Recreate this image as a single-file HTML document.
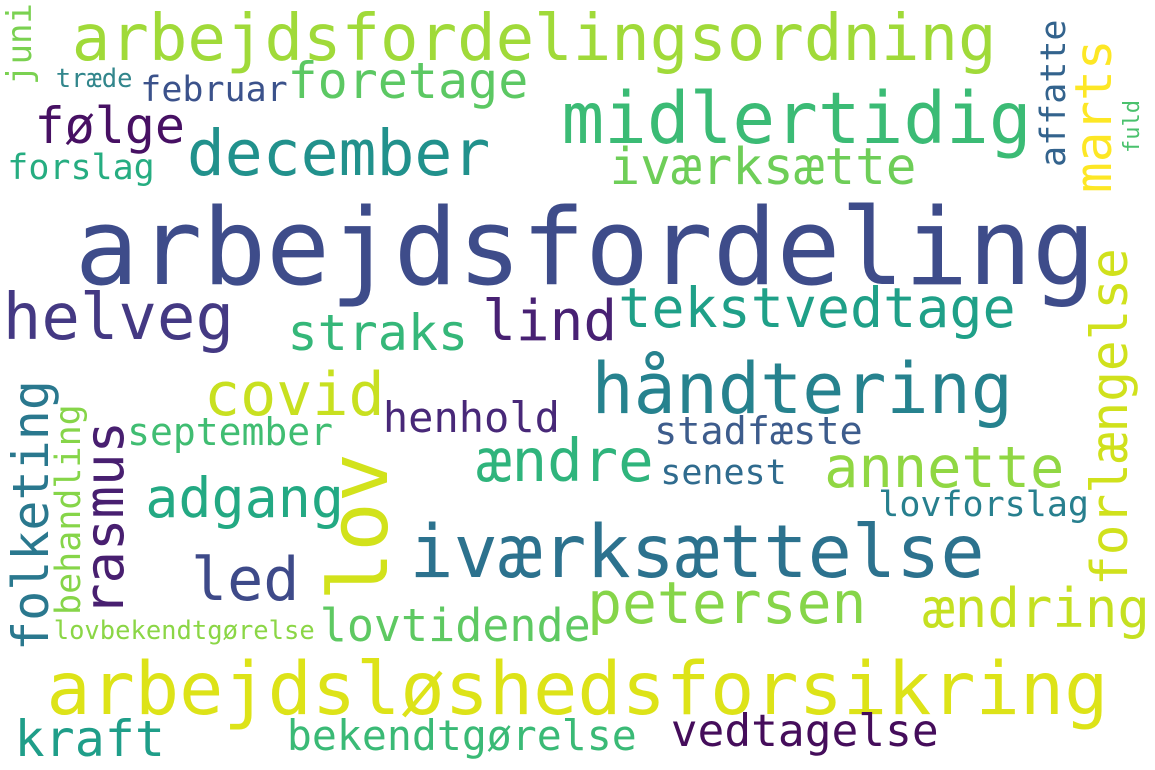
<!DOCTYPE html>
<html><head><meta charset="utf-8">
<style>
html,body{margin:0;padding:0;background:#fff;}
#c{position:relative;width:1155px;height:770px;overflow:hidden;background:#fff;font-family:"DejaVu Sans Mono","Liberation Mono",monospace;}
.h,.v{position:absolute;line-height:1;white-space:nowrap;font-size:calc(var(--s)*1px);}
.h{left:calc(var(--x)*1px - var(--s)*0.05px);top:calc(var(--b)*1px + 3px - var(--s)*0.846px);}
.v{left:calc(var(--bx)*1px - var(--s)*0.846px);top:calc(var(--y)*1px + var(--s)*0.05px);transform:rotate(-90deg);transform-origin:0 0;}
</style></head><body><div id="c">
<span class="h" style="--x:80;--b:282;--s:106;color:#3e4c8a">arbejdsfordeling</span>
<span class="h" style="--x:75;--b:58;--s:64;color:#a0da39">arbejdsfordelingsordning</span>
<span class="h" style="--x:565;--b:140;--s:71;color:#3bbb75">midlertidig</span>
<span class="h" style="--x:290;--b:95;--s:50;color:#5cc863">foretage</span>
<span class="h" style="--x:190;--b:172;--s:63;color:#21918c">december</span>
<span class="h" style="--x:37;--b:140;--s:50;color:#471063">følge</span>
<span class="h" style="--x:142;--b:100;--s:35;color:#3b528b">februar</span>
<span class="h" style="--x:57;--b:86;--s:25.5;color:#32868c">træde</span>
<span class="h" style="--x:9;--b:178;--s:35;color:#26ad81">forslag</span>
<span class="v" style="--bx:32;--y:83;--s:34;color:#7ad151">juni</span>
<span class="h" style="--x:612;--b:182;--s:51;color:#6ece58">iværksætte</span>
<span class="v" style="--bx:1112;--y:190;--s:51;color:#fde725">marts</span>
<span class="v" style="--bx:1067;--y:165;--s:35;color:#33638d">affatte</span>
<span class="v" style="--bx:1141;--y:152;--s:22;color:#4ac16d">fuld</span>
<span class="h" style="--x:621;--b:325;--s:55;color:#1fa088">tekstvedtage</span>
<span class="h" style="--x:6;--b:337;--s:64;color:#443983">helveg</span>
<span class="h" style="--x:290;--b:347;--s:50;color:#35b779">straks</span>
<span class="h" style="--x:485;--b:338;--s:56;color:#482173">lind</span>
<span class="v" style="--bx:1128;--y:583;--s:51;color:#d0e11c">forlængelse</span>
<span class="h" style="--x:595;--b:410;--s:70;color:#26828e">håndtering</span>
<span class="h" style="--x:207;--b:413;--s:60;color:#c8e020">covid</span>
<span class="h" style="--x:385;--b:430;--s:42;color:#482878">henhold</span>
<span class="h" style="--x:129;--b:442;--s:38;color:#40bd72">september</span>
<span class="h" style="--x:656;--b:443;--s:38.5;color:#3d5c8c">stadfæste</span>
<span class="h" style="--x:479;--b:478;--s:59;color:#2fb47c">ændre</span>
<span class="h" style="--x:662;--b:483;--s:35;color:#2f6b8e">senest</span>
<span class="h" style="--x:827;--b:485;--s:57;color:#90d743">annette</span>
<span class="v" style="--bx:48;--y:648;--s:50;color:#2a788e">folketing</span>
<span class="v" style="--bx:82;--y:613;--s:35;color:#86d549">behandling</span>
<span class="v" style="--bx:124;--y:613;--s:54;color:#481f70">rasmus</span>
<span class="h" style="--x:148;--b:515;--s:55;color:#23a983">adgang</span>
<span class="v" style="--bx:388;--y:597;--s:82;color:#d2e21b">lov</span>
<span class="h" style="--x:413;--b:575;--s:73.5;color:#2c728e">iværksættelse</span>
<span class="h" style="--x:194;--b:598;--s:60;color:#3e4a89">led</span>
<span class="h" style="--x:322;--b:638;--s:45;color:#5ec962">lovtidende</span>
<span class="h" style="--x:55;--b:638;--s:25.5;color:#8bd646">lovbekendtgørelse</span>
<span class="h" style="--x:590;--b:620;--s:58;color:#86d549">petersen</span>
<span class="h" style="--x:925;--b:625;--s:54;color:#c5e021">ændring</span>
<span class="h" style="--x:880;--b:515;--s:35;color:#277f8e">lovforslag</span>
<span class="h" style="--x:50;--b:712;--s:73.5;color:#dde318">arbejdsløshedsforsikring</span>
<span class="h" style="--x:17;--b:753;--s:50;color:#1f9e89">kraft</span>
<span class="h" style="--x:289;--b:747;--s:41.5;color:#3aba76">bekendtgørelse</span>
<span class="h" style="--x:673;--b:745;--s:44.5;color:#450d5b">vedtagelse</span>
</div></body></html>
